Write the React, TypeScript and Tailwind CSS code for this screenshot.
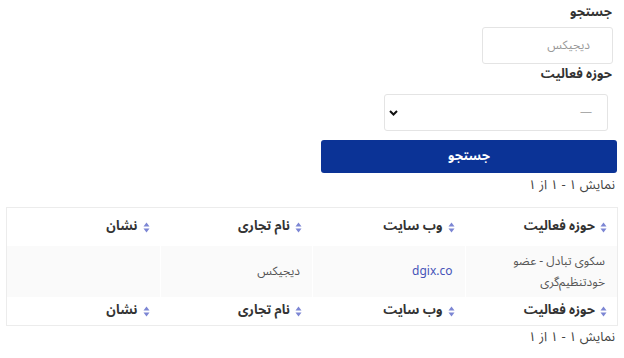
import React from "react";

function SortIcon() {
  return (
    <svg width="7" height="11" viewBox="0 0 7 11" className="shrink-0">
      <path d="M3.5 0.5 L6.5 4.5 H0.5 Z" fill="#7c86d4" />
      <path d="M3.5 10.5 L6.5 6.5 H0.5 Z" fill="#7c86d4" />
    </svg>
  );
}

function HeadCell({ label }: { label: string }) {
  return (
    <div className="flex h-full items-center gap-[5px] pr-[10px] text-[13px] font-bold text-[#333]">
      <SortIcon />
      <span>{label}</span>
    </div>
  );
}

const cols = ["حوزه فعالیت", "وب سایت", "نام تجاری", "نشان"];

export default function App() {
  return (
    <div
      dir="rtl"
      className="h-[358px] w-[624px] overflow-hidden bg-white pt-[2px] text-[#333]"
      style={{ fontFamily: '"Noto Sans Arabic", "DejaVu Sans", sans-serif' }}
    >
      <div className="pr-[12px] text-[13px] font-bold leading-[20px]">جستجو</div>
      <div className="mr-[11px] mt-[5px] flex h-[37px] w-[131px] items-center rounded-[3px] border border-[#e4e4e4] pr-[22px] text-[12px] text-[#999]">
        دیجیکس
      </div>
      <div className="pr-[12px] text-[13px] font-bold leading-[20px]">حوزه فعالیت</div>
      <div className="mr-[16px] mt-[10px] flex h-[37px] w-[224px] items-center justify-between rounded-[3px] border border-[#e4e4e4] pl-[4px] pr-[15px]">
        <span className="text-[12px] text-[#aaa]">—</span>
        <svg width="9" height="6" viewBox="0 0 9 6">
          <path d="M1 1 L4.5 4.5 L8 1" stroke="#111" strokeWidth="2" fill="none" />
        </svg>
      </div>
      <button
        type="button"
        className="mr-[7px] mt-[9px] flex h-[33px] w-[296px] items-center justify-center rounded-[3px] bg-[#0b3396] text-[13px] font-bold text-white"
      >
        جستجو
      </button>
      <div className="mt-[2px] pr-[9px] text-[13px] leading-[20px] text-[#444]">نمایش ۱ - ۱ از ۱</div>

      <div className="mx-[6px] mt-[12px] border border-[#ececec]">
        <div className="grid h-[38px] grid-cols-4">
          {cols.map((c) => (
            <HeadCell key={c} label={c} />
          ))}
        </div>
        <div className="grid h-[51px] grid-cols-4 bg-[#fafafa] text-[12px]">
          <div className="flex items-center border-l border-white pr-[12px] leading-[21px] text-[#555]">
            <div>
              سکوی تبادل - عضو
              <br />
              خودتنظیم‌گری
            </div>
          </div>
          <div className="flex items-center border-l border-white pr-[12px] text-[#4654b8]">dgix.co</div>
          <div className="flex items-center border-l border-white pr-[12px] text-[#555]">دیجیکس</div>
          <div />
        </div>
        <div className="grid h-[28px] grid-cols-4">
          {cols.map((c) => (
            <HeadCell key={c} label={c} />
          ))}
        </div>
      </div>
      <div className="mt-[1px] pr-[9px] text-[13px] leading-[20px] text-[#444]">نمایش ۱ - ۱ از ۱</div>
    </div>
  );
}
